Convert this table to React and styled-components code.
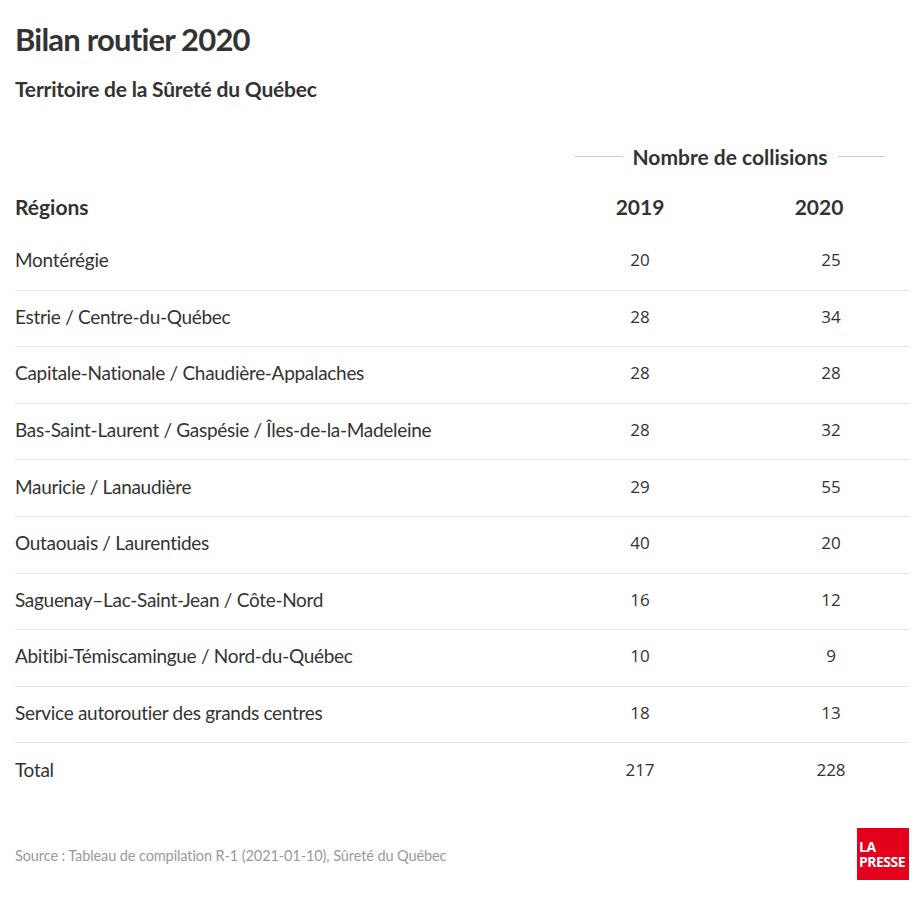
import React from 'react';
import styled, { createGlobalStyle } from 'styled-components';

const rows = [
  ['Montérégie', 20, 25],
  ['Estrie / Centre-du-Québec', 28, 34],
  ['Capitale-Nationale / Chaudière-Appalaches', 28, 28],
  ['Bas-Saint-Laurent / Gaspésie / Îles-de-la-Madeleine', 28, 32],
  ['Mauricie / Lanaudière', 29, 55],
  ['Outaouais / Laurentides', 40, 20],
  ['Saguenay–Lac-Saint-Jean / Côte-Nord', 16, 12],
  ['Abitibi-Témiscamingue / Nord-du-Québec', 10, 9],
  ['Service autoroutier des grands centres', 18, 13],
  ['Total', 217, 228],
];

const GlobalStyle = createGlobalStyle`
  body {
    margin: 0;
    background: #fff;
    color: #333;
    font-family: Lato, "Open Sans", sans-serif;
  }
`;

const Page = styled.div`
  width: 924px;
  padding: 16px 15px 0 15px;
  box-sizing: border-box;
`;

const Title = styled.h1`
  margin: 0;
  font-size: 31px;
  font-weight: 700;
  line-height: 46px;
  letter-spacing: -0.8px;
`;

const Subtitle = styled.h2`
  margin: 13px 0 0;
  font-size: 21px;
  font-weight: 700;
  line-height: 28px;
  letter-spacing: -0.2px;
`;

const Table = styled.div`
  display: grid;
  grid-template-columns: 1fr 226px 156px;
  margin-top: 36px;
`;

const GroupHead = styled.div`
  grid-column: 2 / 4;
  display: flex;
  align-items: center;
  gap: 10px;
  margin: 0 24px 0 48px;
  height: 34px;
  font-size: 21px;
  font-weight: 700;
  white-space: nowrap;
`;

const Rule = styled.span`
  flex: 1;
  height: 1px;
  background: #ccc;
`;

const HeadCell = styled.div`
  font-size: 21px;
  font-weight: 700;
  height: 61px;
  padding-top: 21px;
  box-sizing: border-box;
  text-align: ${(p) => (p.$num ? 'center' : 'left')};
  padding-right: ${(p) => (p.$shift ? '24px' : '0')};
`;

const Cell = styled.div`
  height: 56.6px;
  display: flex;
  align-items: center;
  justify-content: ${(p) => (p.$num ? 'center' : 'flex-start')};
  padding-bottom: 4px;
  font-family: ${(p) => (p.$num ? '"Open Sans", sans-serif' : 'Lato, sans-serif')};
  font-size: ${(p) => (p.$num ? '17px' : '19px')};
  letter-spacing: ${(p) => (p.$num ? '0' : '-0.3px')};
  border-bottom: ${(p) => (p.$last ? 'none' : '1px solid #e6e6e6')};
  box-sizing: border-box;
`;

const Footer = styled.div`
  display: flex;
  justify-content: space-between;
  align-items: flex-start;
  margin-top: 28px;
`;

const Source = styled.div`
  font-size: 14.5px;
  color: #999;
  padding-top: 19px;
  letter-spacing: -0.1px;
`;

const Logo = styled.div`
  width: 52px;
  height: 52px;
  background: #e2001a;
  color: #fff;
  font-family: "Open Sans", sans-serif;
  font-weight: 700;
  font-size: 14px;
  line-height: 15px;
  letter-spacing: -0.5px;
  display: flex;
  flex-direction: column;
  justify-content: center;
  padding-left: 2px;
  box-sizing: border-box;
  overflow: hidden;
  span {
    display: block;
  }
`;

export default function App() {
  return (
    <Page>
      <GlobalStyle />
      <Title>Bilan routier 2020</Title>
      <Subtitle>Territoire de la Sûreté du Québec</Subtitle>
      <Table>
        <GroupHead>
          <Rule />
          <span>Nombre de collisions</span>
          <Rule />
        </GroupHead>
        <HeadCell>Régions</HeadCell>
        <HeadCell $num>2019</HeadCell>
        <HeadCell $num $shift>2020</HeadCell>
        {rows.map(([name, a, b], i) => {
          const last = i === rows.length - 1;
          return (
            <React.Fragment key={name}>
              <Cell $last={last}>{name}</Cell>
              <Cell $num $last={last}>{a}</Cell>
              <Cell $num $last={last}>{b}</Cell>
            </React.Fragment>
          );
        })}
      </Table>
      <Footer>
        <Source>Source : Tableau de compilation R-1 (2021-01-10), Sûreté du Québec</Source>
        <Logo>
          <span>LA</span>
          <span>PRESSE</span>
        </Logo>
      </Footer>
    </Page>
  );
}
